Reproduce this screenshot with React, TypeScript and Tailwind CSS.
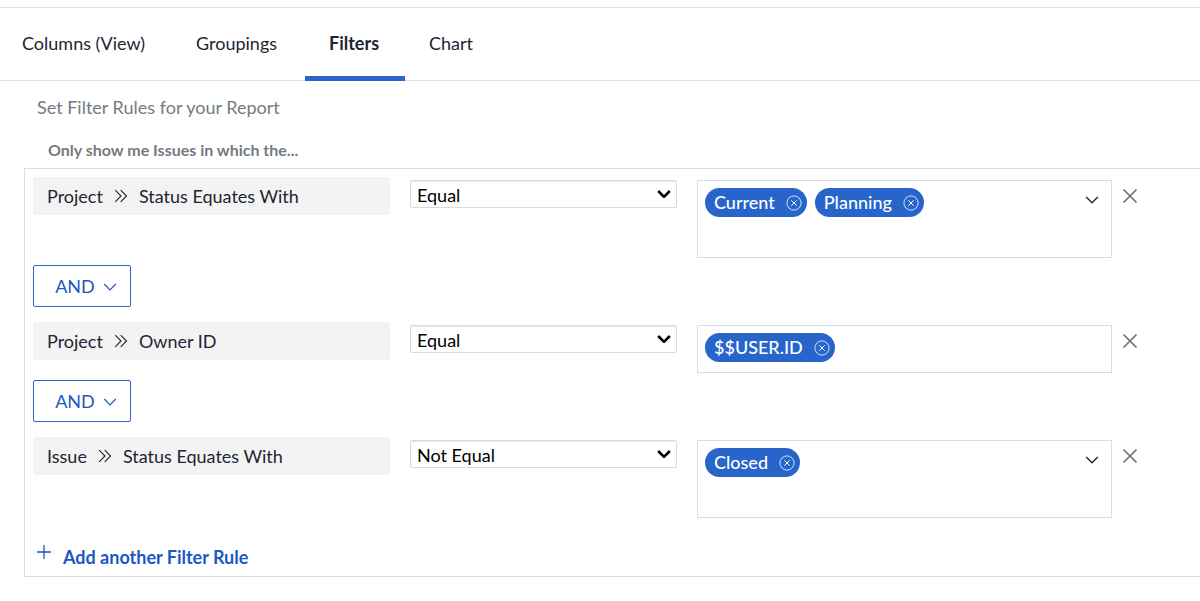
import { useState } from "react";

type Rule = {
  id: string;
  source: string;
  field: string;
  operator: string;
  values: string[];
  picker: boolean;
};

const tabs = [
  { name: "Columns (View)", size: "w-[172px] pl-[22px]" },
  { name: "Groupings", size: "w-[133px] pl-6" },
  { name: "Filters", size: "w-[100px] pl-6" },
  { name: "Chart", size: "w-[92px] pl-6" },
];

const rules: Rule[] = [
  { id: "status", source: "Project", field: "Status Equates With", operator: "Equal", values: ["Current", "Planning"], picker: true },
  { id: "owner", source: "Project", field: "Owner ID", operator: "Equal", values: ["$$USER.ID"], picker: false },
  { id: "issue", source: "Issue", field: "Status Equates With", operator: "Not Equal", values: ["Closed"], picker: true },
];

function Chevron({ className }: { className: string }) {
  return (
    <svg viewBox="0 0 14 8" className={className} fill="none" stroke="currentColor" aria-hidden="true">
      <path d="M1.2 1 7 6.8 12.8 1" />
    </svg>
  );
}

function DoubleChevron() {
  return (
    <svg viewBox="0 0 14 14" className="h-3.5 w-3.5 shrink-0" fill="none" stroke="currentColor" strokeWidth="1.1" aria-hidden="true">
      <path d="M1.2 1.2 7 7l-5.8 5.8M6.7 1.2 12.5 7l-5.8 5.8" />
    </svg>
  );
}

function Pill({ value }: { value: string }) {
  return (
    <span className="flex h-[29px] items-center gap-[11px] rounded-full bg-[#2765cb] pr-[5px] pl-[9px] font-medium text-white">
      <span className="pb-0.5 leading-6">{value}</span>
      <button type="button" aria-label={`Remove ${value}`}>
        <svg viewBox="0 0 16 16" className="h-4 w-4" fill="none" stroke="currentColor" aria-hidden="true">
          <circle cx="8" cy="8" r="7.1" strokeWidth="0.8" />
          <path d="m5.3 5.3 5.4 5.4m0-5.4-5.4 5.4" strokeWidth="1" />
        </svg>
      </button>
    </span>
  );
}

function RuleRow({ rule }: { rule: Rule }) {
  return (
    <div className="mb-[7px] grid grid-cols-[357fr_267fr_443fr] gap-5">
      <div className="flex h-[38px] items-center gap-[11px] rounded-xs bg-[#f3f3f3] px-3.5">
        <span>{rule.source}</span>
        <DoubleChevron />
        <span>{rule.field}</span>
      </div>
      <div className="relative mt-[3px] h-7 text-black">
        <select
          aria-label={`${rule.source} ${rule.field} operator`}
          defaultValue={rule.operator}
          className="h-7 w-full appearance-none rounded-xs border border-[#dadada] bg-white px-1.5 pt-0.5 leading-6 shadow-[inset_0_1px_1px_#e8e8e8]"
        >
          <option>Equal</option>
          <option>Not Equal</option>
        </select>
        <Chevron className="pointer-events-none absolute top-2.5 right-1.5 h-2 w-3.5 stroke-[2.6]" />
      </div>
      <div className="mt-[3px] flex items-start gap-2">
        <div className={`flex flex-1 items-start border border-[#dadcdd] p-[7px] ${rule.picker ? "h-[78px]" : "h-12"}`}>
          <div className="flex flex-1 gap-2">
            {rule.values.map((v) => (
              <Pill key={v} value={v} />
            ))}
          </div>
          {rule.picker && (
            <button type="button" aria-label="Show values" className="mt-2 mr-[5px]">
              <Chevron className="h-2 w-3.5 stroke-[1.3]" />
            </button>
          )}
        </div>
        <button type="button" aria-label="Remove rule" className="mt-2 flex w-5 justify-center text-[#6c717a]">
          <svg viewBox="0 0 16 16" className="h-4 w-4" fill="none" stroke="currentColor" strokeWidth="1.7" aria-hidden="true">
            <path d="m1.5 1.5 13 13m0-13-13 13" />
          </svg>
        </button>
      </div>
    </div>
  );
}

export default function App() {
  const [active, setActive] = useState("Filters");
  return (
    <div className="bg-white pt-[7px] font-['Lato',sans-serif] text-[18px] text-[#1f2433]">
      <nav className="flex h-[74px] border-y border-[#dcdedf]">
        {tabs.map((t) => (
          <button
            key={t.name}
            type="button"
            onClick={() => setActive(t.name)}
            className={`-mb-px border-b-[5px] pt-0.5 text-left ${t.size} ${
              active === t.name ? "border-[#2765cb] font-bold" : "border-transparent"
            }`}
          >
            {t.name}
          </button>
        ))}
      </nav>
      <main>
        <h1 className="mt-3.5 pl-[37px] leading-6 text-[#757a82]">Set Filter Rules for your Report</h1>
        <h2 className="mt-[19px] pl-12 text-[16px] leading-6 font-bold text-[#757a82]">Only show me Issues in which the...</h2>
        <section className="mt-1.5 ml-6 border-y border-l border-[#dadcdd] pt-2 pr-[60px] pb-[7px] pl-2">
          {rules.map((r, i) => (
            <div key={r.id}>
              {i > 0 && (
                <button
                  type="button"
                  className="mb-[15px] flex h-[42px] w-[98px] items-center justify-center gap-2 rounded-xs border border-[#2765cb] pt-px pl-2 text-[#1d57c2]"
                >
                  AND
                  <Chevron className="h-2 w-3.5 stroke-[1.2]" />
                </button>
              )}
              <RuleRow rule={r} />
            </div>
          ))}
          <button type="button" className="mt-[27px] flex items-start gap-3 pl-1 font-bold text-[#1d57c2]">
            <svg viewBox="0 0 14 14" className="h-3.5 w-3.5" fill="none" stroke="currentColor" strokeWidth="1.3" aria-hidden="true">
              <path d="M7 0v14M0 7h14" />
            </svg>
            <span className="leading-6">Add another Filter Rule</span>
          </button>
        </section>
      </main>
    </div>
  );
}
